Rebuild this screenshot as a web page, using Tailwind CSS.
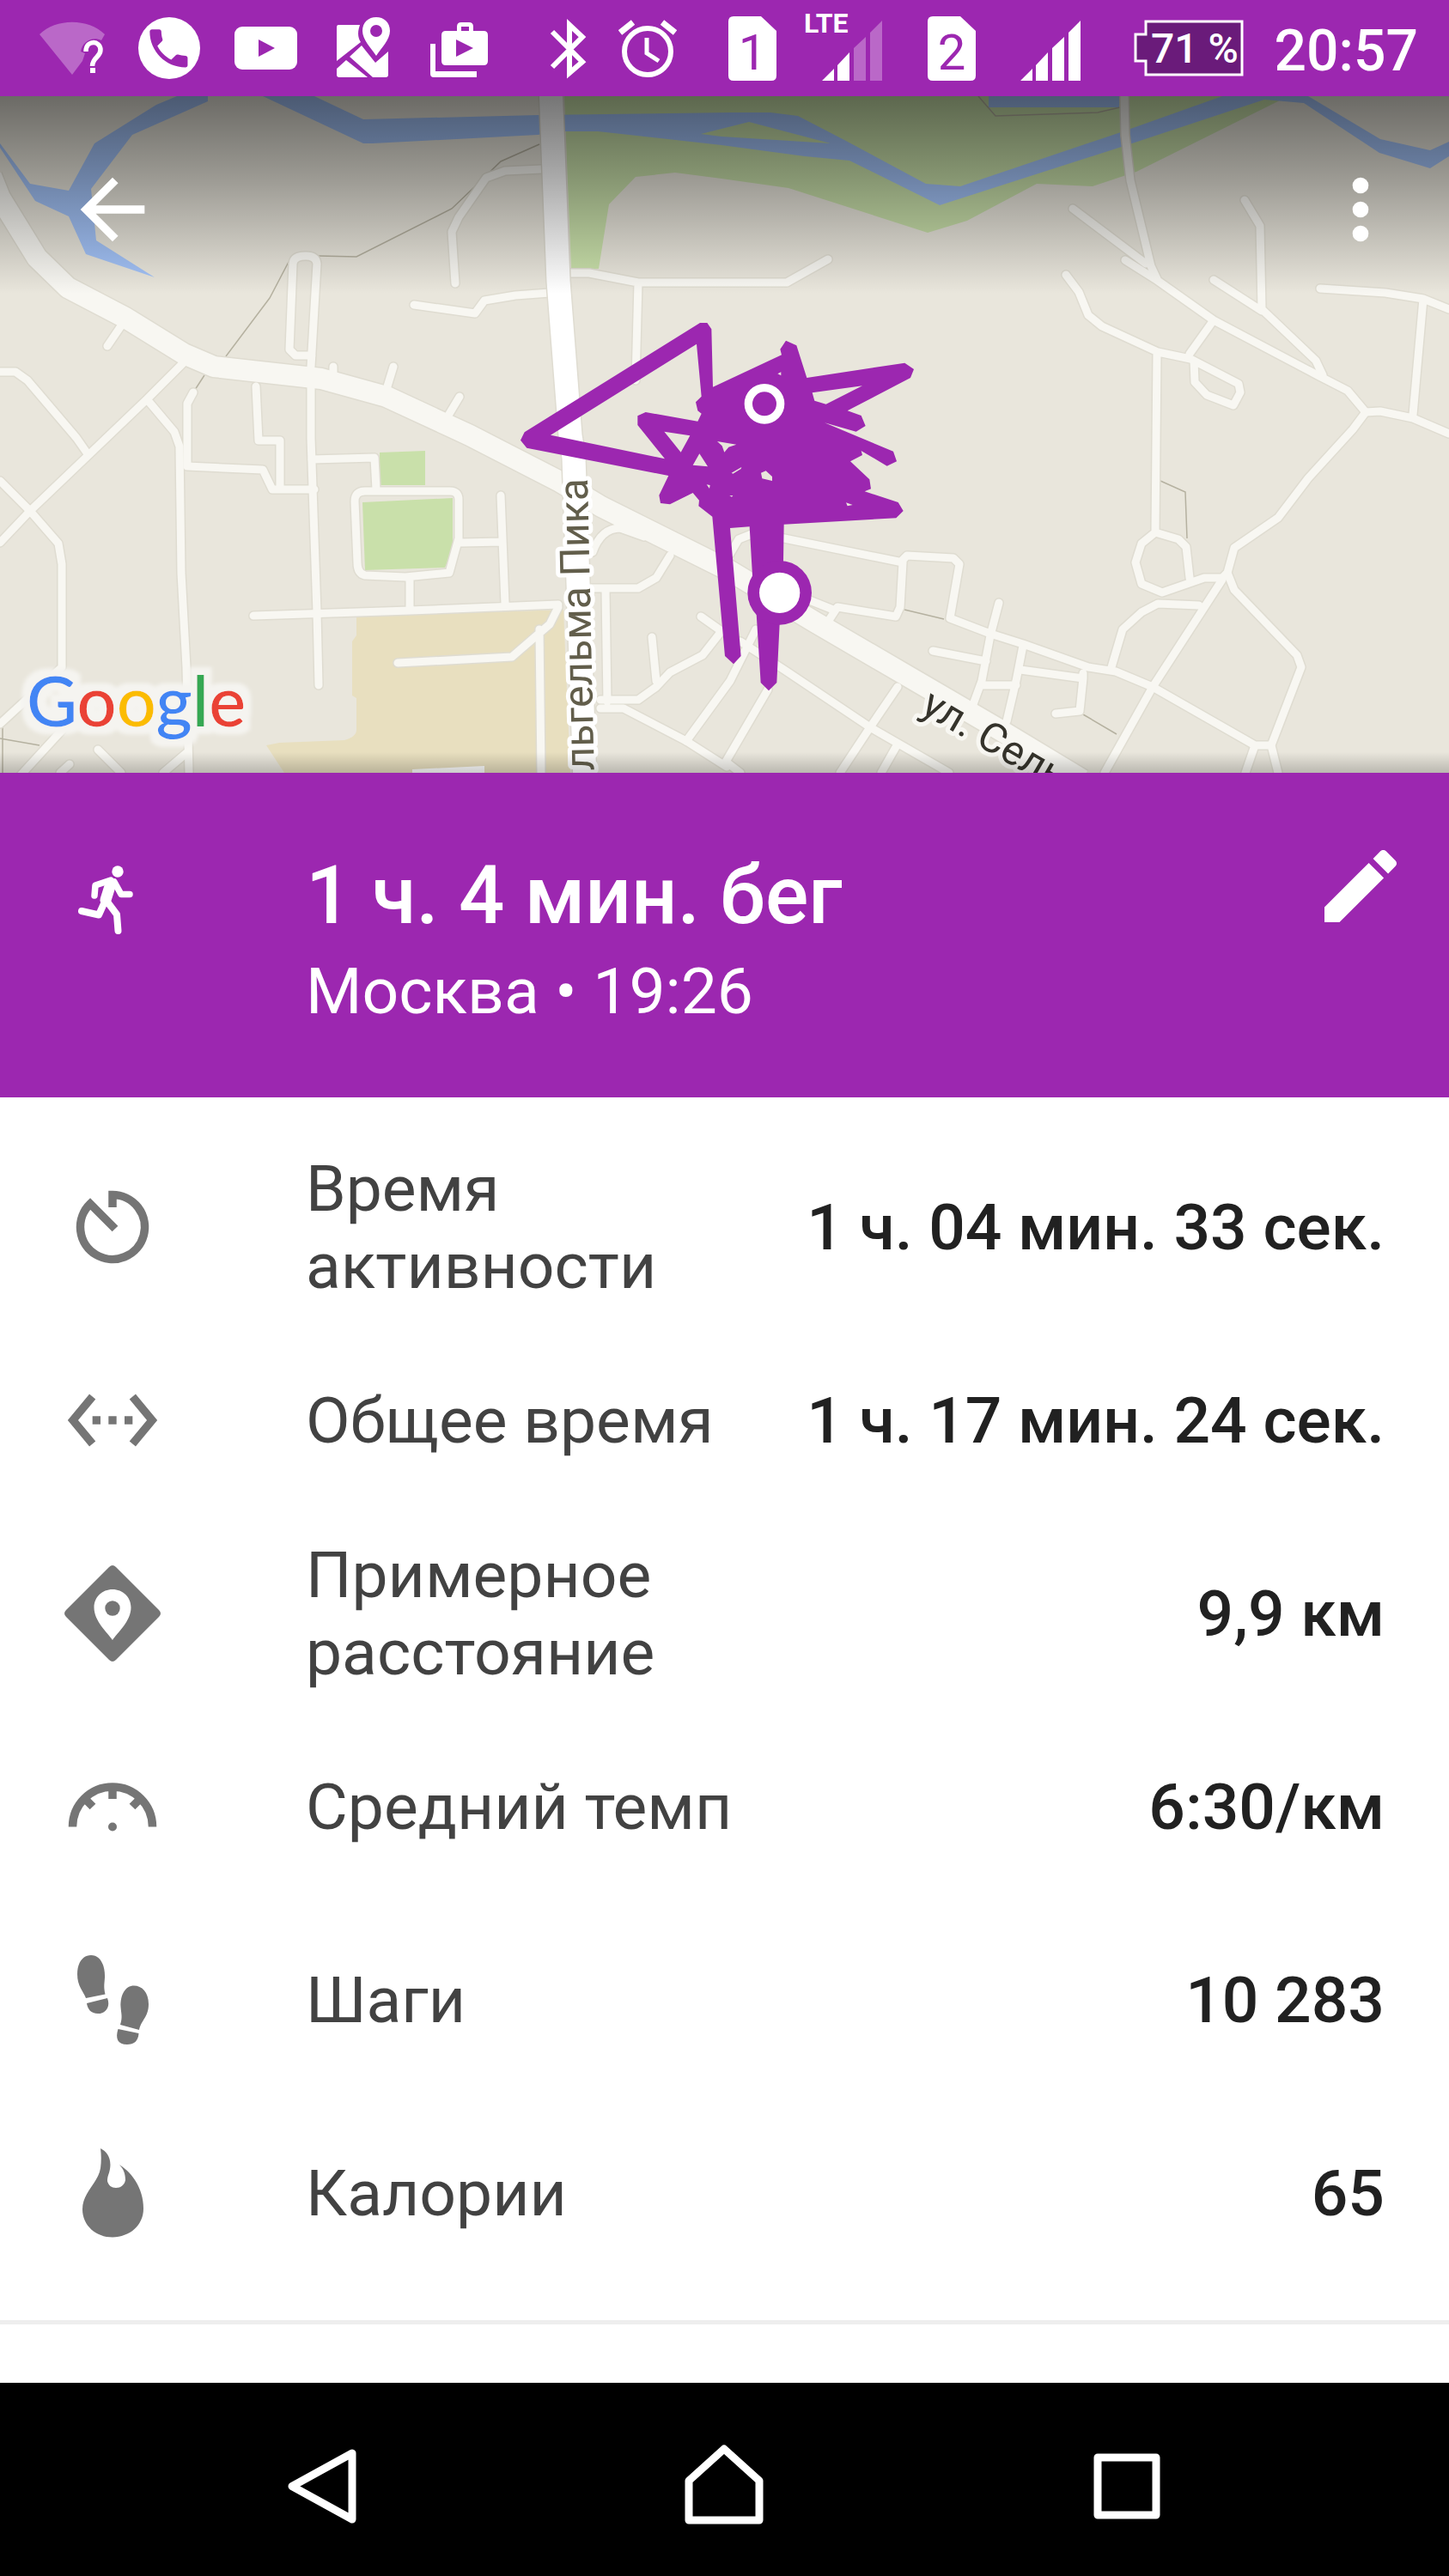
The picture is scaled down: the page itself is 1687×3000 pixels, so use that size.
<!DOCTYPE html>
<html lang="ru">
<head>
    <meta charset="UTF-8">
    <meta name="viewport" content="width=device-width, initial-scale=1.0">
    <title>1 ч. 4 мин. бег</title>
    <script src="https://cdn.jsdelivr.net/npm/@tailwindcss/browser@4"></script>
</head>
<body class="min-h-screen flex flex-col bg-white font-['Roboto',sans-serif] text-[#212121]">

    <!-- Status bar -->
    <div class="h-28 shrink-0 flex items-center bg-[#9c27b0] text-white pl-7 pr-9">
        <svg class="w-28 h-28" viewBox="0 0 112 112" fill="#fff">
            <path d="M18 40C37 21 75 21 94 40L90 47C80 42 68 48 66 60L71 62 68 71 56 87Z" opacity=".3"/>
            <path d="M72 60C72 46 89 47 89 58 89 67 80 66 79.500 77" fill="none" stroke="#fff" stroke-width="5.500"/>
            <path d="M77 79h6v6h-6z"/>
        </svg>
        <svg class="w-28 h-28" viewBox="0 0 112 112">
            <circle cx="57" cy="56" r="36" fill="#fff"/>
            <path fill="#9c27b0" transform="translate(27 27) scale(2.450)" d="M6.620 10.790c1.440 2.830 3.760 5.140 6.590 6.590l2.200-2.200c.27-.27.67-.36 1.020-.24 1.120.37 2.330.57 3.570.57.55 0 1 .45 1 1V20c0 .55-.45 1-1 1-9.390 0-17-7.610-17-17 0-.55.45-1 1-1h3.500c.55 0 1 .45 1 1 0 1.250.2 2.450.57 3.570.11.35.03.74-.25 1.020l-2.200 2.200z"/>
        </svg>
        <svg class="w-28 h-28" viewBox="0 0 112 112">
            <rect x="21" y="31" width="73" height="50" rx="9" fill="#fff"/>
            <path d="M49 46L68 56 49 66Z" fill="#9c27b0"/>
        </svg>
        <svg class="w-28 h-28" viewBox="0 0 112 112" fill="#fff">
            <path d="M30 29H55C51 40 54 46 56 49L28 71V32Q28 29 30 29Z"/>
            <path d="M28 80L39 70 64 90H31Q28 90 28 87Z"/>
            <path d="M43 66L57 53 73 73 88 60V87Q88 90 85 90H70Z"/>
            <path fill-rule="evenodd" d="M74 20C83 20 90 26 90 36 90 46 80 56 74 65 68 56 58 46 58 36 58 26 65 20 74 20ZM74 29A7 7 0 1 0 74 43 7 7 0 1 0 74 29Z"/>
        </svg>
        <svg class="w-28 h-28" viewBox="0 0 112 112" fill="#fff">
            <path d="M25 51H31V83H79V90H29Q25 90 25 86Z"/>
            <path fill-rule="evenodd" d="M56 36V31Q56 26 61 26H70Q75 26 75 31V36H87Q92 36 92 41V71Q92 76 87 76H43Q38 76 38 71V41Q38 36 43 36ZM61 36H70V31H61ZM55 46V66L75 56Z"/>
        </svg>

        <svg class="ml-auto w-11 h-28" viewBox="0 0 44 112" fill="none" stroke="#fff" stroke-width="6">
            <path d="M3 37L38 72 23 85V29L38 43 3 78"/>
        </svg>
        <svg class="ml-9 w-17 h-28" viewBox="0 0 68 112" fill="none" stroke="#fff" stroke-width="6">
            <circle cx="34" cy="60" r="27"/>
            <path d="M33 44V62L47 71" stroke-width="5"/>
            <path d="M2 38L17 26M51 26L66 38" stroke-width="7"/>
        </svg>
        <svg class="ml-15 w-14 h-28" viewBox="0 0 56 112">
            <path d="M6 19H38L56 36V88Q56 94 50 94H6Q0 94 0 88V25Q0 19 6 19Z" fill="#fff"/>
            <text x="28" y="81" text-anchor="middle" font-size="58" fill="#9c27b0">1</text>
        </svg>
        <svg class="ml-8 w-23 h-28" viewBox="0 0 92 112" fill="#fff">
            <text x="0" y="38" font-size="32" font-weight="700">LTE</text>
            <path d="M21 94L35 80V94ZM39 76L53 61V94H39Z"/>
            <path d="M58 56L72 43V94H58ZM77 38L91 24V94H77Z" opacity=".3"/>
        </svg>
        <svg class="ml-13 w-14 h-28" viewBox="0 0 56 112">
            <path d="M6 19H38L56 36V88Q56 94 50 94H6Q0 94 0 88V25Q0 19 6 19Z" fill="#fff"/>
            <text x="28" y="81" text-anchor="middle" font-size="58" fill="#9c27b0">2</text>
        </svg>
        <svg class="ml-13 w-18 h-28" viewBox="0 0 72 112" fill="#fff">
            <path d="M0 94L14 80V94ZM18 76L32 61V94H18ZM37 56L51 43V94H37ZM56 38L70 24V94H56Z"/>
        </svg>
        <svg class="ml-15 w-32 h-28" viewBox="0 0 128 112">
            <path d="M14 25H126V87H14V71H2V40H14Z" fill="#6a1b7a" stroke="#fff" stroke-width="3"/>
            <text x="71" y="73" text-anchor="middle" font-size="48" font-weight="500" fill="#fff">71 %</text>
        </svg>
        <span class="ml-9 mt-2 text-[66px] leading-none font-medium">20:57</span>
    </div>

    <!-- Map -->
    <div class="relative overflow-hidden bg-[#e9e6dc]">
        <svg class="block w-full h-auto" viewBox="0 112 1687 788">
            <!-- Parks and water -->
            <g fill="#c9e0aa">
                <path d="M657 112H1495L1488 118 1323 200 1272 217 1207 214 1126 257 1080 271 918 219 840 208 786 201 740 206 709 238 697 313H665Z"/>
                <path d="M442 527L495 525V565H442Z"/>
                <path d="M422 585L527 580V640L518 661 425 664Z"/>
            </g>
            <g fill="#a3c3f8">
                <path d="M0 167L35 214 80 222 110 167 182 122 206 112H242V118L154 157 106 220 112 280 180 323 100 296 80 252 41 234 0 172Z"/>
                <path d="M306 112H366L423 139 626 134 850 131H897L929 135 983 163 1078 214 1118 217 1305 154 1423 112H1523L1607 162 1665 175 1687 165V182L1665 196 1606 178 1518 120 1472 116 1318 167 1094 239 989 187 937 182 840 169 696 153 658 153 626 157 434 167H423Z"/>
                <path d="M1151 112H1303V125H1151Z"/>
            </g>
            <path d="M816 156L872 142 967 167 840 159Z" fill="#c9e0aa"/>
            <path d="M415 718L656 710 664 900H331L310 868 325 865 401 862Q415 858 415 850V813L410 810V747L415 740Z" fill="#e8dfbf"/>
            <path d="M480 900V896L564 892V900Z" fill="#fff"/>

            <!-- Footpaths -->
            <g fill="none" stroke="#b5b1a0" stroke-width="1.500">
                <path d="M628 168L583 188 550 220 526 243 415 299 371 298M336 305L314 347 263 415M238 437L225 457"/>
                <path d="M1139 112L1159 135 1278 131 1304 125M1351 560L1380 573 1382 627M1053 710L1099 721M1261 832L1300 855M3 847V900M0 860L46 868"/>
            </g>

            <!-- Streets: soft edge below, surface above -->
            <defs>
                <g id="streets" fill="none" stroke-linecap="round" stroke-linejoin="round">
                    <path d="M0 433H18L32 443 89 510 103 530M214 422L171 465 103 530 35 595 0 632M171 465L203 503 209 520 211 667 217 777 220 900"/>
                    <path d="M225 457L218 470V543L306 547 317 570H366M298 450L301 513H326V570M362 450V510L369 713 371 798"/>
                    <path d="M362 427L369 307Q368 298 356 298 342 298 341 307L337 407 344 414H363M144 375L125 403M458 427L451 450M388 427V440M535 462L523 482"/>
                    <path d="M631 197L588 199 566 207 534 253 526 270 530 330M482 355L553 365 564 350 600 344 640 341M665 318H686L743 329H916L964 302M743 329L740 443"/>
                    <path d="M1309 112L1310 157 1316 210 1340 310 1348 327M1249 243L1334 307M1310 303L1348 327 1413 373 1534 437 1569 455 1590 480 1575 500 1523 557 1488 603 1437 638 1429 667 1437 687 1510 763 1515 777 1480 868 1488 900"/>
                    <path d="M1590 480L1607 479 1645 487 1687 505M1657 348L1645 483M1537 336L1613 341 1657 348 1687 360M1449 233L1467 263 1469 360 1532 420 1540 437M1413 326L1469 362M1410 377L1385 412"/>
                    <path d="M1241 320L1256 340 1267 367 1283 380 1348 410 1386 418 1442 447 1444 457 1436 472 1405 460 1391 445 1390 420M1347 412L1345 620 1372 628 1381 637 1385 673M1345 620L1329 633 1322 655 1329 680 1353 690 1402 673H1423L1429 667"/>
                    <path d="M1423 675L1342 800 1286 900M1396 705L1348 703 1329 713 1307 733 1294 777M850 645L860 628 880 620 913 627 1051 655 1048 707 1043 718 975 707 962 727M940 698L970 710"/>
                    <path d="M1051 652L1056 647 1110 650 1117 657 1106 720 1153 738 1191 750 1267 777 1299 782 1342 800 1461 868 1450 900M1461 868H1480M1163 702L1153 740 1143 793 1132 823M1086 758L1148 770M1191 752L1183 793 1172 840M1145 798H1183M1188 780L1261 790V784M1261 790L1257 828 1229 831"/>
                    <path d="M862 747L913 780 1013 847 1105 900M1045 800L1013 847 978 900M1043 870L1026 900M880 733L850 793 799 863M894 803L845 887 862 900"/>
                    <path d="M0 560L35 595 68 633 72 657V777L0 843M100 820L22 905M81 890L70 900M114 873L141 900M217 877L190 900"/>
                    <path d="M363 535L436 533 438 570M425 572H524Q534 572 534 582V627L523 667 472 672 425 670Q416 668 416 655L413 584Q413 572 425 572ZM477 673V707M295 717L477 711 650 704M583 577L588 703M537 632L585 631"/>
                    <path d="M463 772L596 765 640 727 650 707M628 733L630 900M688 685H743L764 673 780 647M690 643Q700 615 722 615L750 625M705 687L707 817M816 718L840 735 818 763 780 783 764 800 743 815H699M759 742L764 793M699 825H726L799 863 846 893"/>
                </g>
                <path id="highway" fill="none" stroke-linejoin="round" d="M-10 205L0 230 43 300 79 335 146 370 214 412 249 427 374 441 450 462 547 507 650 560 700 590 850 665 948 724 1056 787 1164 850 1260 908"/>
                <linearGradient id="shadeTop" x2="0" y2="1">
                    <stop offset="0" stop-opacity=".54"/>
                    <stop offset=".4" stop-opacity=".34"/>
                    <stop offset="1" stop-opacity="0"/>
                </linearGradient>
                <linearGradient id="shadeBottom" x2="0" y2="1">
                    <stop offset="0" stop-opacity="0"/>
                    <stop offset="1" stop-opacity=".2"/>
                </linearGradient>
                <filter id="halo" x="-10%" y="-20%" width="120%" height="140%">
                    <feMorphology in="SourceAlpha" operator="dilate" radius="9" result="wide"/>
                    <feGaussianBlur in="wide" stdDeviation="2" result="soft"/>
                    <feFlood flood-color="#f5f4f0"/>
                    <feComposite in2="soft" operator="in" result="edge"/>
                    <feMerge><feMergeNode in="edge"/><feMergeNode in="SourceGraphic"/></feMerge>
                </filter>
            </defs>
            <use href="#streets" stroke="#dfdcd1" stroke-width="12"/>
            <use href="#highway" stroke="#dfdcd1" stroke-width="27"/>
            <use href="#streets" stroke="#f8f7f2" stroke-width="9"/>
            <use href="#highway" stroke="#f8f7f2" stroke-width="24"/>
            <path d="M641 100L650 327 664 507 668 533 681 910" fill="none" stroke="#dfdcd1" stroke-width="30"/>
            <path d="M641 100L650 327 664 507 668 533 681 910" fill="none" stroke="#fff" stroke-width="27"/>

            <!-- Street names -->
            <g font-size="48" stroke-linejoin="round" paint-order="stroke">
                <text transform="translate(684 557) rotate(-91.300)" text-anchor="end" fill="#625e4b" stroke="#fff" stroke-width="10">льгельма Пика</text>
                <text transform="translate(1070 829) rotate(30)" fill="#35332b" stroke="#f8f7f2" stroke-width="10">ул. Сель</text>
            </g>

            <!-- Map logo -->
            <text x="31" y="846" font-family="Lato" font-size="81" font-weight="500" filter="url(#halo)"><tspan fill="#4285f4">G</tspan><tspan fill="#ea4335">o</tspan><tspan fill="#fbbc05">o</tspan><tspan fill="#4285f4">g</tspan><tspan fill="#34a853">l</tspan><tspan fill="#ea4335">e</tspan></text>

            <!-- Recorded route -->
            <g transform="translate(580 350) scale(.33333)">
                <path fill="#9c27b0" fill-rule="evenodd" d="M705 78H730L745 100 750 302 990 190 985 170 1005 140 1042 157 1078 270 1420 218 1452 240 1440 270 1220 385 1268 402 1283 438 1250 458 1140 427 1380 527 1392 562 1358 578 1268 525 1272 540 1230 562 1297 625 1302 658 1280 667 1397 705 1415 735 1390 760 998 782 996 910 983 1130 973 1335 945 1363 917 1335 902 1095 888 960 878 790 810 795 848 1242 822 1270 792 1242 748 755 700 718 702 698 680 672 600 712 567 708 562 680 595 612 100 515 78 488 92 460Z
                    M693 152L710 335 690 355 697 385 710 395 697 422 515 390 487 403V435L582 553 183 470Z
                    M580 458L670 472 638 530ZM703 535L732 580 680 575ZM765 492L832 503 805 512 790 530 782 508ZM1097 322L1272 298 1145 362 1105 350ZM918 602L935 595 957 615V630L922 622ZM815 602L850 582 848 588 820 605ZM728 643L740 645 738 657ZM976 256L988 250V262ZM1215 706L1238 714 1220 718ZM808 682L820 681 816 686Z"/>
                <circle cx="930" cy="361" r="56" fill="none" stroke="#fff" stroke-width="28"/>
                <circle cx="983" cy="1021" r="112" fill="#9c27b0"/>
                <circle cx="983" cy="1021" r="71" fill="#fff"/>
            </g>

            <rect y="112" width="1687" height="230" fill="url(#shadeTop)"/>
            <rect y="876" width="1687" height="24" fill="url(#shadeBottom)"/>
        </svg>
        <div class="absolute inset-x-0 top-0 flex justify-between pt-19 pl-[75px] pr-[47px]">
            <button type="button" aria-label="Назад">
                <svg class="size-28" viewBox="0 0 24 24" fill="#fff"><path d="M20 11H7.830l5.590-5.590L12 4l-8 8 8 8 1.410-1.410L7.830 13H20v-2z"/></svg>
            </button>
            <button type="button" aria-label="Ещё">
                <svg class="size-28" viewBox="0 0 24 24" fill="#fff"><circle cx="12" cy="6" r="2"/><circle cx="12" cy="12" r="2"/><circle cx="12" cy="18" r="2"/></svg>
            </button>
        </div>
    </div>

    <!-- Activity title -->
    <header class="flex items-start bg-[#9c27b0] text-white pt-19 pb-20 pl-[75px] pr-[47px]">
        <svg class="size-28 mt-4 mr-[169px] shrink-0" viewBox="0 0 112 112" fill="none" stroke="#fff" stroke-width="8" stroke-linecap="round" stroke-linejoin="round">
            <circle cx="62" cy="23" r="6.700" fill="#fff" stroke="none"/>
            <path d="M54 33L36 39 35 51M58 35L66 49.500 76 49.500" stroke-width="7.500"/>
            <path d="M54 37L48 56" stroke-width="13"/>
            <path d="M47 58L40 73.500 20 69M49 57L61 73 62.500 92"/>
        </svg>
        <div class="flex-1 pt-3">
            <h1 class="text-[94px] leading-[110px] font-medium">1 ч. 4 мин. бег</h1>
            <p class="mt-3 text-[75px] leading-[88px]">Москва • 19:26</p>
        </div>
        <button type="button" aria-label="Изменить">
            <svg class="size-28" viewBox="0 0 24 24" fill="#fff"><path d="M3 17.250V21h3.750L17.810 9.940l-3.750-3.750L3 17.250zM20.710 7.040c.39-.39.39-1.020 0-1.410l-2.340-2.340c-.39-.39-1.020-.39-1.410 0l-1.830 1.830 3.750 3.750 1.830-1.830z"/></svg>
        </button>
    </header>

    <!-- Stats -->
    <main class="grow">
        <dl class="pt-[38px] pb-9 border-b-5 border-[#eeeeee] text-[75px] leading-[90px]">
            <div class="h-[225px] flex items-center px-[75px]">
                <svg class="size-28 mr-[169px] shrink-0" viewBox="0 0 112 112"><path d="M56 33V18.500A37.500 37.500 0 1 1 30 29L59 58" fill="none" stroke="#757575" stroke-width="9.500"/></svg>
                <dt class="flex-1 text-[#424242]">Время<br>активности</dt>
                <dd class="font-medium">1 ч. 04 мин. 33 сек.</dd>
            </div>
            <div class="h-[225px] flex items-center px-[75px]">
                <svg class="size-28 mr-[169px] shrink-0" viewBox="0 0 24 24" fill="#757575"><path d="M7.770 6.760L6.230 5.480.82 12l5.410 6.520 1.540-1.280L3.420 12l4.350-5.240zM7 13h2v-2H7v2zm10-2h-2v2h2v-2zm-6 2h2v-2h-2v2zm6.770-7.520l-1.540 1.280L20.580 12l-4.350 5.240 1.540 1.280L23.180 12l-5.410-6.520z"/></svg>
                <dt class="flex-1 text-[#424242]">Общее время</dt>
                <dd class="font-medium">1 ч. 17 мин. 24 сек.</dd>
            </div>
            <div class="h-[225px] flex items-center px-[75px]">
                <svg class="size-28 mr-[169px] shrink-0" viewBox="0 0 112 112" fill="#757575">
                    <path fill-rule="evenodd" d="M52 2Q56 -2 60 2L110 52Q114 56 110 60L60 110Q56 114 52 110L2 60Q-2 56 2 52ZM56 28C44 28 34.500 37 34.500 49 34.500 65 50 78 56 87 62 78 77.500 65 77.500 49 77.500 37 68 28 56 28Z"/>
                    <circle cx="56" cy="50" r="8.700"/>
                </svg>
                <dt class="flex-1 text-[#424242]">Примерное<br>расстояние</dt>
                <dd class="font-medium">9,9 км</dd>
            </div>
            <div class="h-[225px] flex items-center px-[75px]">
                <svg class="size-28 mr-[169px] shrink-0" viewBox="0 0 112 112">
                    <path d="M9.500 79.500A46.500 46.500 0 0 1 102.500 79.500M56 30V47M23 46L33 56M89 46L79 56" fill="none" stroke="#757575" stroke-width="9.500"/>
                    <circle cx="56" cy="79.500" r="5" fill="#757575"/>
                </svg>
                <dt class="flex-1 text-[#424242]">Средний темп</dt>
                <dd class="font-medium">6:30/км</dd>
            </div>
            <div class="h-[225px] flex items-center px-[75px]">
                <svg class="size-28 mr-[169px] shrink-0" viewBox="0 0 112 112" fill="#757575">
                    <path d="M25 54C22 46 15 40 15 26 15 12 22 4 31 4 42 4 47.500 16 47 30 46.500 38 45.500 41 47.500 49.500ZM26 60L50 54C54 64 48 72 39 72 31 72 27 67 26 60Z"/>
                    <path d="M65 85C68 76 66 72 65.500 64 65 50 71 39.500 81 39.500 90 39.500 98 47 98 61 98 76 89 80 87 91ZM62.500 90L86.500 95C86 104 81 108 73 108 62 108 59 101 62.500 90Z"/>
                </svg>
                <dt class="flex-1 text-[#424242]">Шаги</dt>
                <dd class="font-medium">10 283</dd>
            </div>
            <div class="h-[225px] flex items-center px-[75px]">
                <svg class="size-28 mr-[169px] shrink-0" viewBox="0 0 112 112" fill="#757575"><path d="M42 4C50 8 55 16 53 28 52 34 50 36 50 42 51 47 55 50 60 50 66 50 70 46 71 41 71 34 69 28 64 23 80 33 92 52 92 74 92 94 76 107 56 107.500 37 107.500 21 94 21 75 21 55 39 45 42 27 43 19 43 12 42 4Z"/></svg>
                <dt class="flex-1 text-[#424242]">Калории</dt>
                <dd class="font-medium">65</dd>
            </div>
        </dl>
    </main>

    <!-- Navigation bar -->
    <nav class="h-[225px] shrink-0 flex justify-center items-center bg-black">
        <button type="button" class="w-[27.8%] flex justify-center" aria-label="Назад">
            <svg class="size-28" viewBox="0 0 112 112" fill="none" stroke="#fff" stroke-width="9" stroke-linejoin="round"><path d="M91 25V102L21 63.500Z"/></svg>
        </button>
        <button type="button" class="w-[27.8%] flex justify-center" aria-label="Домой">
            <svg class="size-28" viewBox="0 0 112 112" fill="none" stroke="#fff" stroke-width="9" stroke-linejoin="round"><path d="M56 20L97 57V103H15V57Z"/></svg>
        </button>
        <button type="button" class="w-[27.8%] flex justify-center" aria-label="Обзор">
            <svg class="size-28" viewBox="0 0 112 112" fill="none" stroke="#fff" stroke-width="9" stroke-linejoin="round"><path d="M22 30H90V97H22Z"/></svg>
        </button>
    </nav>

</body>
</html>
